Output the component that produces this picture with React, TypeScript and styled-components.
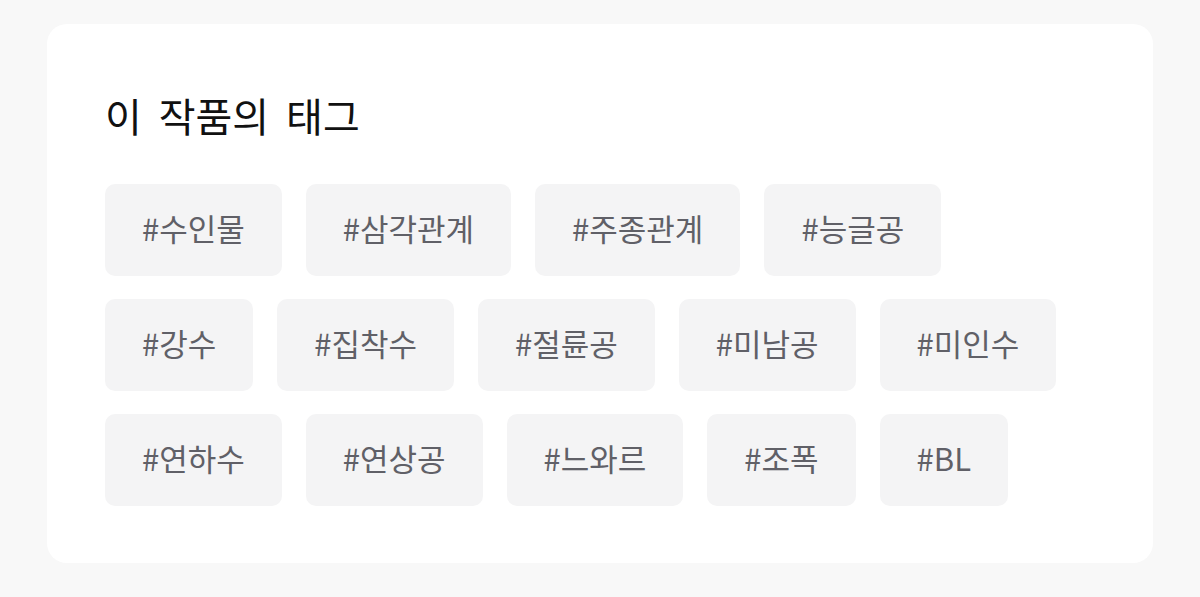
import styled, { createGlobalStyle } from "styled-components";

const GlobalStyle = createGlobalStyle`
  html, body {
    margin: 0;
    padding: 0;
    background: #f8f8f8;
  }
  body {
    font-family: "Noto Sans CJK KR", "Noto Sans", sans-serif;
  }
`;

const Page = styled.div`
  padding: 24px 47px 34px;
`;

const Card = styled.section`
  background: #ffffff;
  border-radius: 20px;
  padding: 58px 58px 57px;
`;

const Title = styled.h2`
  margin: 0 0 36px;
  font-size: 40px;
  line-height: 66px;
  font-weight: 400;
  word-spacing: 8px;
  color: #111111;
`;

const TagList = styled.div`
  display: flex;
  flex-direction: column;
  row-gap: 23px;
`;

const Row = styled.div`
  display: flex;
  column-gap: 24px;
`;

const Tag = styled.span`
  box-sizing: border-box;
  height: 92px;
  padding: 0 37px 5px;
  display: flex;
  align-items: center;
  background: #f4f4f5;
  border-radius: 10px;
  font-size: 31px;
  color: #606067;
  white-space: nowrap;
`;

const rows = [
  ["수인물", "삼각관계", "주종관계", "능글공"],
  ["강수", "집착수", "절륜공", "미남공", "미인수"],
  ["연하수", "연상공", "느와르", "조폭", "BL"],
];

export default function App() {
  return (
    <>
      <GlobalStyle />
      <Page>
        <Card>
          <Title>이 작품의 태그</Title>
          <TagList>
            {rows.map((row, i) => (
              <Row key={i}>
                {row.map((t) => (
                  <Tag key={t}>#{t}</Tag>
                ))}
              </Row>
            ))}
          </TagList>
        </Card>
      </Page>
    </>
  );
}
